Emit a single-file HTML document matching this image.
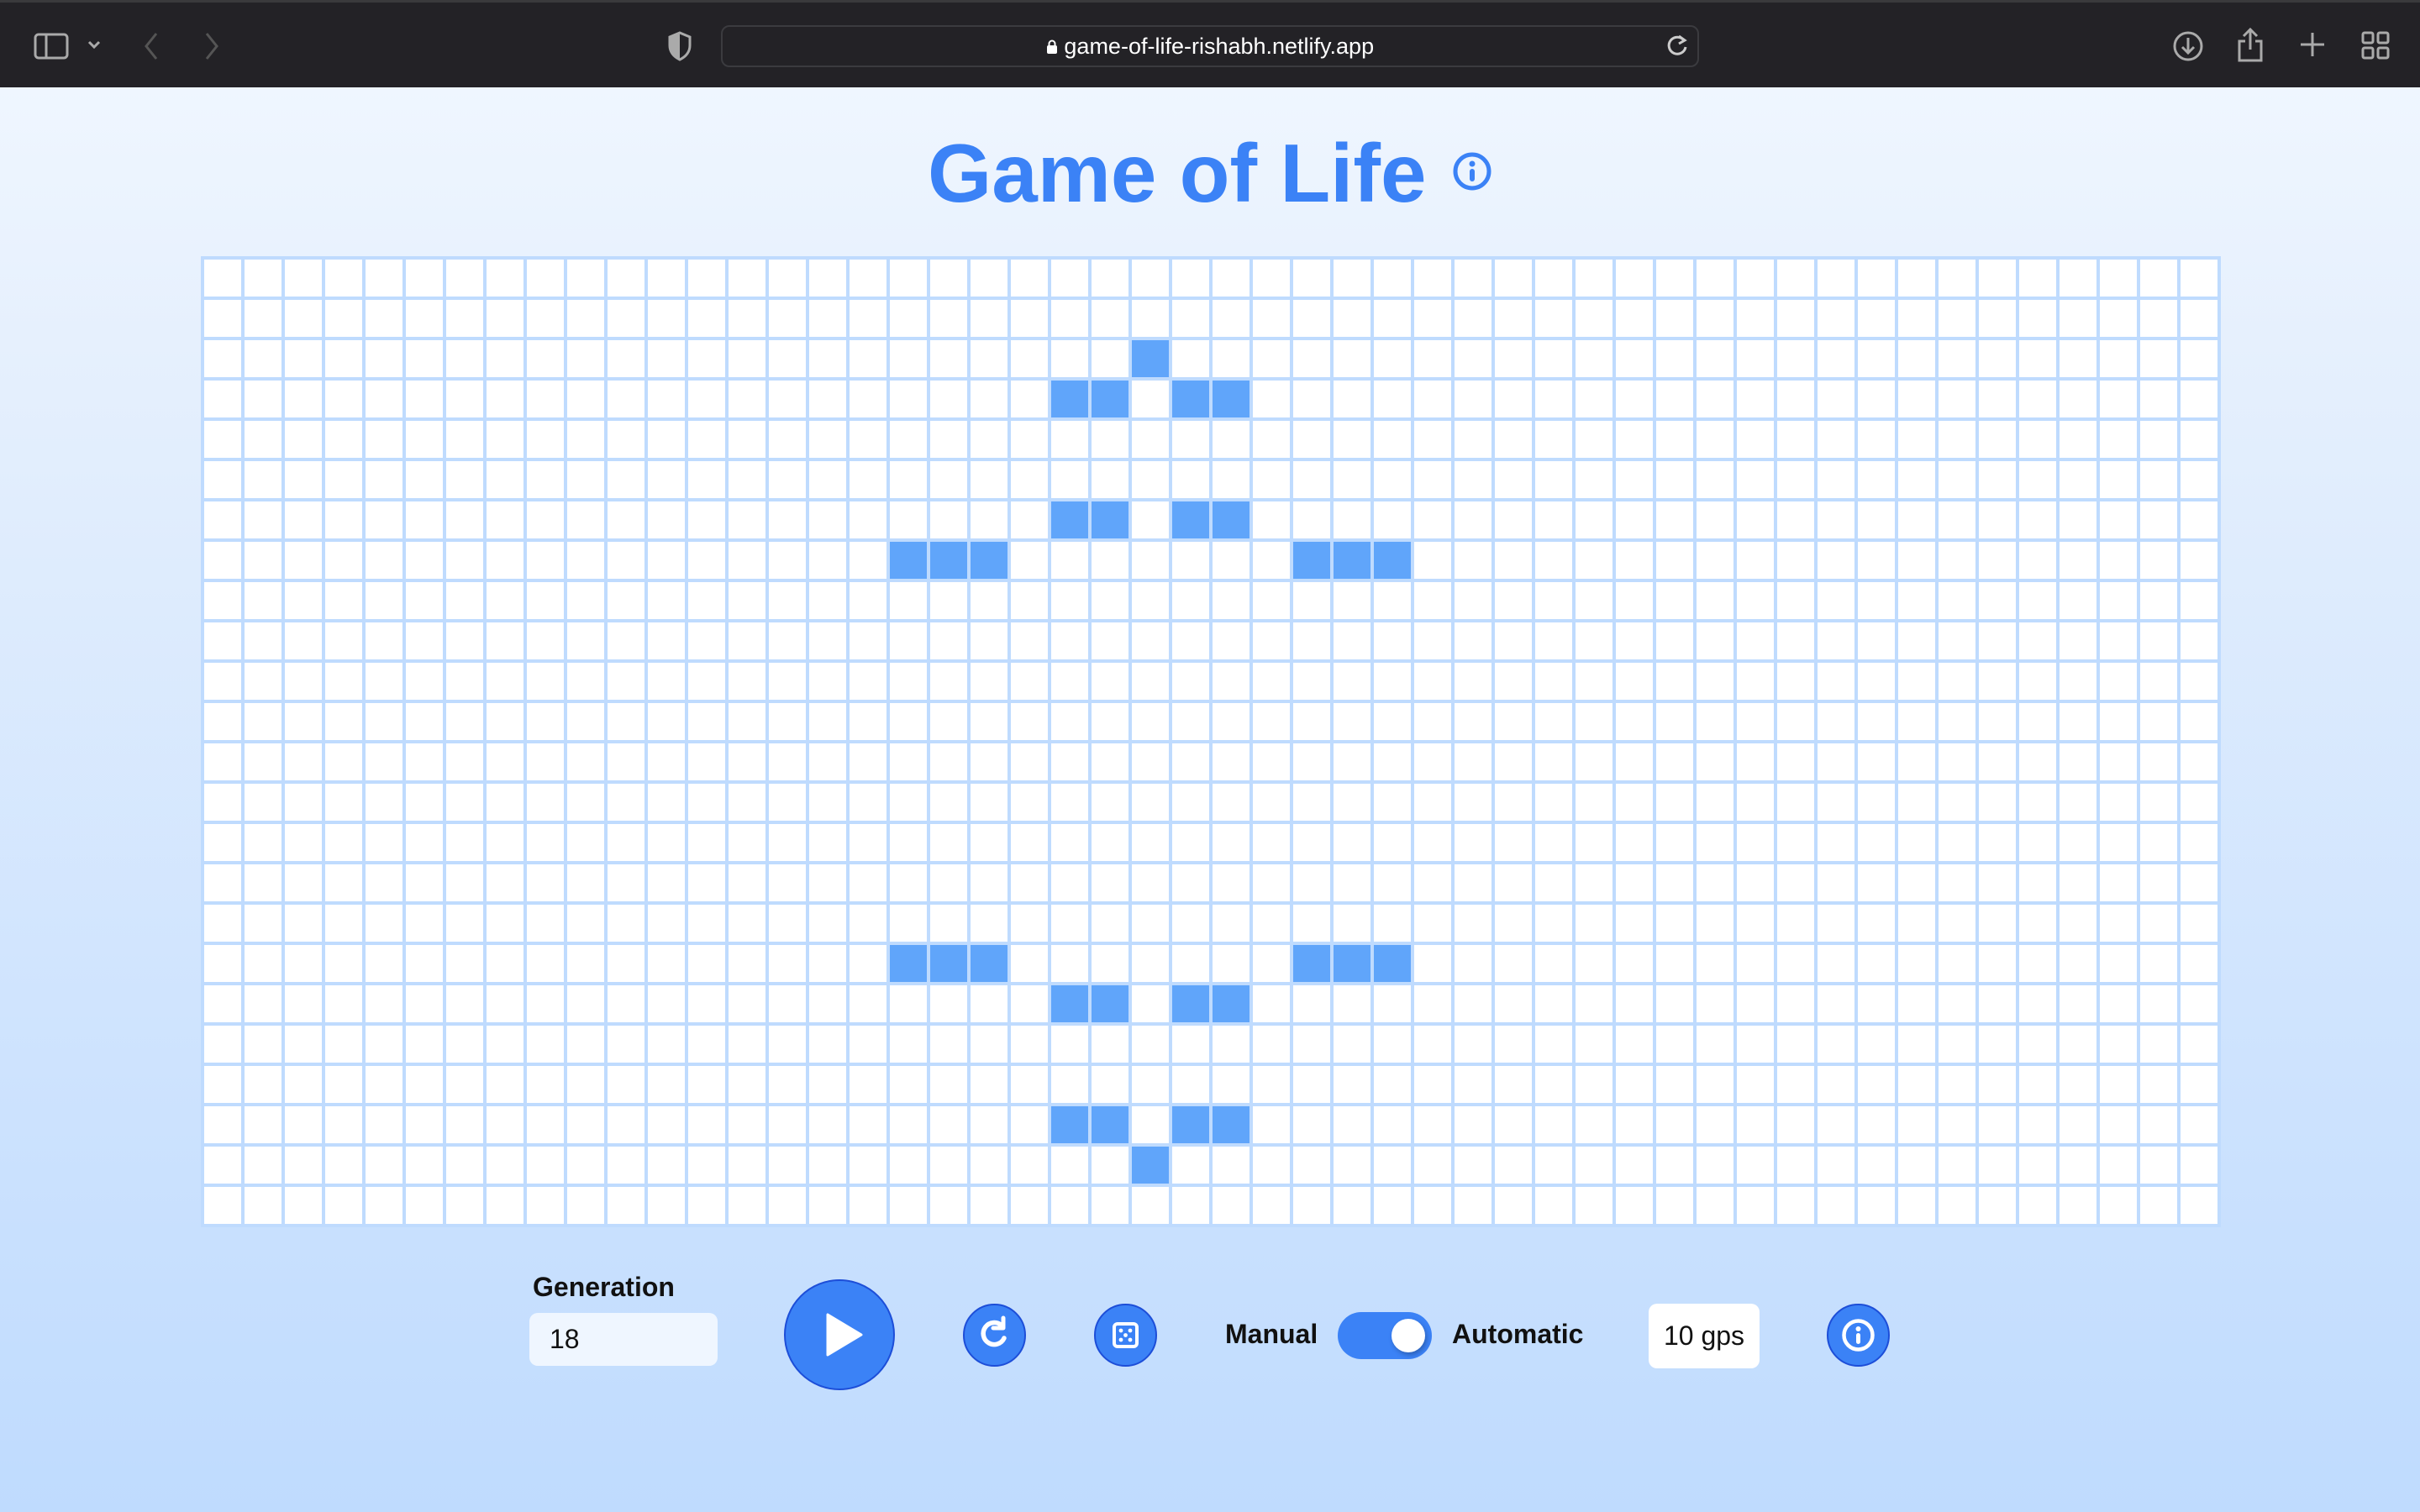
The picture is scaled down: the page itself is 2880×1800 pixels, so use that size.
<!DOCTYPE html>
<html><head><meta charset="utf-8"><style>
*{margin:0;padding:0;box-sizing:border-box}
body{width:2880px;height:1800px;overflow:hidden;font-family:"Liberation Sans",sans-serif;background:linear-gradient(#eff6ff 104px,#e6f0fd 400px,#bfdbfe 1800px);position:relative}
.bar{position:absolute;left:0;top:0;width:2880px;height:104px;background:#232226;border-top:3px solid #3a3a3c}
.url{position:absolute;left:858px;top:27px;width:1164px;height:50px;border:2px solid #3b3b3f;border-radius:10px;color:#fff;font-size:27px;text-align:center;line-height:46px}
.title{position:absolute;left:1104px;top:150px;white-space:nowrap;font-size:98px;font-weight:bold;color:#3b82f6;letter-spacing:0px}
.grid{position:absolute;left:239px;top:305px;width:2404px;height:1156px;background-color:#fff;background-image:linear-gradient(to right,#bfdbfe 4px,transparent 4px),linear-gradient(to bottom,#bfdbfe 4px,transparent 4px);background-size:48px 48px}
.c{position:absolute;width:44px;height:44px;background:#60a5fa}
.btn{position:absolute;border-radius:50%;background:#3b82f6;border:2px solid #1d4ed8}
.lbl{position:absolute;font-size:32px;font-weight:bold;color:#111}
</style></head><body>
<div class="bar">
<svg style="position:absolute;left:40px;top:36px" width="42" height="32" viewBox="0 0 42 32"><rect x="2" y="2" width="38" height="28" rx="4" fill="none" stroke="#aaa" stroke-width="3"/><line x1="15" y1="2" x2="15" y2="30" stroke="#aaa" stroke-width="3"/></svg>
<svg style="position:absolute;left:104px;top:44px" width="16" height="12"><path d="M2 3l6 6 6-6" stroke="#aaa" stroke-width="3" fill="none"/></svg>
<svg style="position:absolute;left:170px;top:34px" width="20" height="36"><path d="M16 3L4 18l12 15" stroke="#555" stroke-width="3" fill="none"/></svg>
<svg style="position:absolute;left:242px;top:34px" width="20" height="36"><path d="M4 3l12 15L4 33" stroke="#555" stroke-width="3" fill="none"/></svg>
<svg style="position:absolute;left:794px;top:34px" width="30" height="36"><path d="M15 2L27 7v10c0 9-6 14-12 17C9 31 3 26 3 17V7z" fill="none" stroke="#aaa" stroke-width="3"/><path d="M15 2v32C9 31 3 26 3 17V7z" fill="#aaa"/></svg>
<div class="url"><svg width="14" height="18" style="vertical-align:-1px"><rect x="1" y="7" width="12" height="10" rx="2" fill="#fff"/><path d="M3.5 8V5a3.5 3.5 0 0 1 7 0v3" stroke="#fff" stroke-width="2" fill="none"/></svg> game-of-life-rishabh.netlify.app</div>
<svg style="position:absolute;left:1982px;top:36px" width="28" height="30"><path d="M22 9a10 10 0 1 0 2 8" stroke="#ccc" stroke-width="3" fill="none"/><path d="M16 4l7 5-7 4" stroke="#ccc" stroke-width="3" fill="none"/></svg>
<svg style="position:absolute;left:2584px;top:32px" width="40" height="40"><circle cx="20" cy="20" r="16" stroke="#aaa" stroke-width="3" fill="none"/><path d="M20 10v18M13 21l7 7 7-7" stroke="#aaa" stroke-width="3" fill="none"/></svg>
<svg style="position:absolute;left:2660px;top:28px" width="36" height="44"><path d="M18 4v24M10 12l8-8 8 8M12 18H5v23h26V18h-7" stroke="#aaa" stroke-width="3" fill="none"/></svg>
<svg style="position:absolute;left:2736px;top:34px" width="32" height="32"><path d="M16 2v28M2 16h28" stroke="#aaa" stroke-width="3"/></svg>
<svg style="position:absolute;left:2810px;top:34px" width="34" height="34" fill="none" stroke="#aaa" stroke-width="3"><rect x="2" y="2" width="12" height="12" rx="2"/><rect x="20" y="2" width="12" height="12" rx="2"/><rect x="2" y="20" width="12" height="12" rx="2"/><rect x="20" y="20" width="12" height="12" rx="2"/></svg>
</div>
<div class="title">Game of Life</div>
<svg style="position:absolute;left:1728px;top:180px" width="48" height="48"><circle cx="24" cy="24" r="20" fill="none" stroke="#3b82f6" stroke-width="5"/><circle cx="24" cy="15" r="3.5" fill="#3b82f6"/><rect x="21" y="21" width="6" height="15" rx="3" fill="#3b82f6"/></svg>
<div class="grid">
<div class="c" style="left:1108px;top:100px"></div>
<div class="c" style="left:1012px;top:148px"></div><div class="c" style="left:1060px;top:148px"></div><div class="c" style="left:1156px;top:148px"></div><div class="c" style="left:1204px;top:148px"></div>
<div class="c" style="left:1012px;top:292px"></div><div class="c" style="left:1060px;top:292px"></div><div class="c" style="left:1156px;top:292px"></div><div class="c" style="left:1204px;top:292px"></div>
<div class="c" style="left:820px;top:340px"></div><div class="c" style="left:868px;top:340px"></div><div class="c" style="left:916px;top:340px"></div><div class="c" style="left:1300px;top:340px"></div><div class="c" style="left:1348px;top:340px"></div><div class="c" style="left:1396px;top:340px"></div>
<div class="c" style="left:820px;top:820px"></div><div class="c" style="left:868px;top:820px"></div><div class="c" style="left:916px;top:820px"></div><div class="c" style="left:1300px;top:820px"></div><div class="c" style="left:1348px;top:820px"></div><div class="c" style="left:1396px;top:820px"></div>
<div class="c" style="left:1012px;top:868px"></div><div class="c" style="left:1060px;top:868px"></div><div class="c" style="left:1156px;top:868px"></div><div class="c" style="left:1204px;top:868px"></div>
<div class="c" style="left:1012px;top:1012px"></div><div class="c" style="left:1060px;top:1012px"></div><div class="c" style="left:1156px;top:1012px"></div><div class="c" style="left:1204px;top:1012px"></div>
<div class="c" style="left:1108px;top:1060px"></div>
</div>
<div class="lbl" style="left:634px;top:1514px">Generation</div>
<div style="position:absolute;left:630px;top:1563px;width:224px;height:63px;background:#eff6ff;border-radius:10px;font-size:32px;line-height:63px;padding-left:24px;color:#111">18</div>
<div class="btn" style="left:933px;top:1523px;width:132px;height:132px"><svg width="128" height="128" style="position:absolute;left:0;top:0"><path d="M50 40L50 88 90 64Z" fill="#fff" stroke="#fff" stroke-width="3" stroke-linejoin="round"/></svg></div>
<div class="btn" style="left:1146px;top:1552px;width:75px;height:75px"><svg width="71" height="71" style="position:absolute;left:0;top:0"><path d="M47 39a13 13 0 1 1-3-15" stroke="#fff" stroke-width="5.5" fill="none" stroke-linecap="round"/><path d="M34 27h12v-12" stroke="#fff" stroke-width="5" fill="none" stroke-linecap="round" stroke-linejoin="round"/></svg></div>
<div class="btn" style="left:1302px;top:1552px;width:75px;height:75px"><svg width="71" height="71" style="position:absolute;left:0;top:0"><rect x="22" y="22" width="27" height="27" rx="4" fill="none" stroke="#fff" stroke-width="4"/><g fill="#fff"><circle cx="30" cy="30" r="2.4"/><circle cx="41" cy="30" r="2.4"/><circle cx="35.5" cy="35.5" r="2.4"/><circle cx="30" cy="41" r="2.4"/><circle cx="41" cy="41" r="2.4"/></g></svg></div>
<div class="lbl" style="left:1458px;top:1570px">Manual</div>
<div style="position:absolute;left:1592px;top:1562px;width:112px;height:56px;border-radius:28px;background:#3b82f6"><div style="position:absolute;left:64px;top:8px;width:40px;height:40px;border-radius:50%;background:#fff;box-shadow:2px 3px 6px rgba(0,0,0,.25)"></div></div>
<div class="lbl" style="left:1728px;top:1570px">Automatic</div>
<div style="position:absolute;left:1962px;top:1552px;width:132px;height:77px;background:#fff;border-radius:10px;font-size:32px;line-height:77px;text-align:center;color:#111">10 gps</div>
<div class="btn" style="left:2174px;top:1552px;width:75px;height:75px"><svg width="71" height="71" style="position:absolute;left:0;top:0"><circle cx="35.5" cy="35.5" r="17" fill="none" stroke="#fff" stroke-width="4.5"/><circle cx="35.5" cy="28" r="3" fill="#fff"/><rect x="33" y="33" width="5" height="13" rx="2.5" fill="#fff"/></svg></div>
</body></html>
